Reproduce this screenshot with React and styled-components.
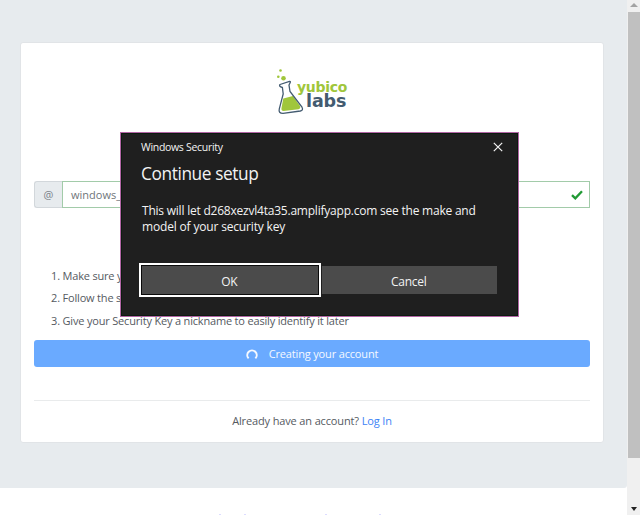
import React from "react";
import styled, { createGlobalStyle } from "styled-components";

const Global = createGlobalStyle`
  * { box-sizing: border-box; }
  html, body { margin: 0; height: 515px; overflow: hidden; background: #fff; }
  body { font-family: "Open Sans", "Noto Sans", sans-serif; color: #555a5f; font-size: 11px; }
`;
const Screen = styled.div`
  position: relative; display: flex; width: 640px; height: 515px; overflow: hidden;
`;
const Page = styled.div` width: 627px; height: 515px; display: flex; flex-direction: column; justify-content: space-between; `;
const Backdrop = styled.section`
  height: 488px; padding: 42px 23px 0 20px; background: #e7ebee; border-radius: 0 0 3px 0;
`;
const Card = styled.main`
  height: 401px; padding: 0 13px; background: #fff; border: 1px solid #e1e4e7; border-radius: 3px;
  display: flex; flex-direction: column;
`;
const LogoRow = styled.header` display: flex; justify-content: center; padding: 25px 0 0 0; height: 138px; `;
const Logo = styled.div` display: flex; width: 74px; height: 48px; `;
const LogoWords = styled.div`
  display: flex; flex-direction: column; margin: 12px 0 0 -8px; font-weight: 700;
`;
const Yubico = styled.span`
  color: #a0c63b; font-family: "DejaVu Sans", sans-serif; font-size: 14px; line-height: 14px; letter-spacing: -0.3px;
`;
const Labs = styled.span`
  color: #435b70; font-family: "DejaVu Sans", sans-serif; font-size: 17.5px; line-height: 14px; margin-left: 9px; letter-spacing: -0.1px;
`;
const InputGroup = styled.div` display: flex; height: 27px; `;
const Prefix = styled.div`
  width: 28px; display: flex; align-items: center; justify-content: center; color: #7b8289;
  background: #e7ebee; border: 1px solid #d2d7db; border-right: 0; border-radius: 3px 0 0 3px;
`;
const Field = styled.div`
  flex: 1; display: flex; align-items: center; justify-content: space-between; padding: 0 6px 0 8px;
  border: 1px solid #a2cba9; color: #70757a;
`;
const Steps = styled.ol`
  list-style: none; margin: 57px 0 8px; padding: 0 0 0 17px; line-height: 22.4px;
`;
const Step = styled.li` display: flex; white-space: nowrap; letter-spacing: -0.18px; `;
const Num = styled.span` width: 11.5px; letter-spacing: 0; `;
const Submit = styled.button`
  height: 27px; flex: none; display: flex; align-items: center; justify-content: center; gap: 11px; padding: 0; border: 0;
  border-radius: 3px; background: #6aaaff; color: #f5f9ff; font: inherit; letter-spacing: -0.16px;
`;
const Rule = styled.hr` width: 100%; margin: 33px 0 0; border: 0; border-top: 1px solid #e9ebec; `;
const Login = styled.p` margin: 11px 0 0; text-align: center; line-height: 17px; letter-spacing: -0.14px; `;
const Link = styled.a` color: #3c82f6; `;
const FooterEdge = styled.footer` display: flex; height: 1px; padding-left: 219px; `;
const Speck = styled.i` width: 2px; height: 1px; background: #dcdcff; margin-right: ${(p) => p.$gap}px; `;

const Scrollbar = styled.aside`
  width: 13px; background: #f0f0f0; display: flex; flex-direction: column; align-items: center; justify-content: space-between; padding: 3px 0 4px 1px;
`;
const Thumb = styled.div` width: 12px; height: 446px; background: #c0c0c0; margin: 5px 0 auto; `;

const Dialog = styled.section`
  position: absolute; left: 120px; top: 132px; width: 399px; height: 185px; padding: 0 21px 0 20px;
  background: #1f1f1f; border: 1px solid #b164a4; box-shadow: inset 0 0 0 1px #0c1a10; color: #f3f3f3;
`;
const TitleBar = styled.div`
  display: flex; justify-content: space-between; align-items: center; height: 28px; margin-right: -6px;
  font-size: 10.5px; letter-spacing: -0.3px;
`;
const Title = styled.h1` margin: 0; font-weight: 400; font-size: 17.3px; line-height: 26px; letter-spacing: -0.4px; `;
const Message = styled.p` margin: 16px 0 0 1px; font-size: 12px; line-height: 16px; white-space: nowrap; `;
const Line = styled.span` display: block; letter-spacing: ${(p) => p.$ls}px; `;
const Actions = styled.div` display: flex; align-items: center; margin: 28px 0 0 -2px; gap: 1px; `;
const Action = styled.button`
  width: ${(p) => (p.$focus ? 182 : 176)}px; height: ${(p) => (p.$focus ? 34 : 28)}px; padding: 2px 1px 0 0;
  font: inherit; font-size: 12px; letter-spacing: -0.25px; color: #f3f3f3; background: #4b4b4b;
  border: ${(p) => (p.$focus ? "2px solid #fff" : "0")};
  box-shadow: ${(p) => (p.$focus ? "inset 0 0 0 1px #0a0a0a" : "none")};
`;

const Flask = () => (
  <svg width="30" height="48" viewBox="0 0 30 48">
    <circle cx="5.5" cy="2.5" r="1.3" fill="#a0c63b" />
    <circle cx="3.3" cy="8.8" r="1.3" fill="#a0c63b" />
    <circle cx="8.5" cy="10.3" r="2.3" fill="#a0c63b" />
    <path d="M8.3 30.5 L18 28 L25 38 Q26 40.5 23.5 41.2 L8.5 43 Q6 43 6.5 40Z" fill="#a0c63b" />
    <path d="M5 16.5 L14.5 13.5 Q16 13.2 15 15 L14 17 L15 23.5 L27 39.2 Q28.6 42.2 25.3 43 L8 45.4 Q3.2 45.4 4.3 40.9 L8.2 26 L7.4 19.5 Q3.5 18.5 5 16.5Z" fill="none" stroke="#435b70" strokeWidth="1.3" />
  </svg>
);

export default function App() {
  return (
    <>
      <Global />
      <Screen>
        <Page>
          <Backdrop>
            <Card>
              <LogoRow>
                <Logo>
                  <Flask />
                  <LogoWords><Yubico>yubico</Yubico><Labs>labs</Labs></LogoWords>
                </Logo>
              </LogoRow>
              <InputGroup>
                <Prefix>@</Prefix>
                <Field>
                  <span>windows_</span>
                  <svg width="12" height="10" viewBox="0 0 12 10"><path d="M1 5.2 L4.3 8.4 L11 1.2" fill="none" stroke="#219a35" strokeWidth="2.3" /></svg>
                </Field>
              </InputGroup>
              <Steps>
                <Step><Num>1.</Num>Make sure y</Step>
                <Step><Num>2.</Num>Follow the s</Step>
                <Step><Num>3.</Num>Give your Security Key a nickname to easily identify it later</Step>
              </Steps>
              <Submit>
                <svg width="12" height="12" viewBox="0 0 12 12"><path d="M2.6 10.4 A4.7 4.7 0 1 1 9.4 10.4" fill="none" stroke="#f5f9ff" strokeWidth="2" /></svg>
                Creating your account
              </Submit>
              <Rule />
              <Login>Already have an account? <Link>Log In</Link></Login>
            </Card>
          </Backdrop>
          <FooterEdge><Speck $gap={23} /><Speck $gap={79} /><Speck $gap={52} /><Speck $gap={0} /></FooterEdge>
        </Page>
        <Scrollbar>
          <svg width="8" height="4" viewBox="0 0 8 4"><path d="M0 4 L4 0 L8 4Z" fill="#a3a3a3" /></svg>
          <Thumb />
          <svg width="6" height="4" viewBox="0 0 6 4"><path d="M0 0 H6 L3 4Z" fill="#222" /></svg>
        </Scrollbar>
        <Dialog>
          <TitleBar>
            <span>Windows Security</span>
            <svg width="10" height="10" viewBox="0 0 10 10"><path d="M.8 .8 L9.2 9.2 M9.2 .8 L.8 9.2" stroke="#f3f3f3" strokeWidth="1.2" /></svg>
          </TitleBar>
          <Title>Continue setup</Title>
          <Message>
            <Line $ls={-0.22}>This will let d268xezvl4ta35.amplifyapp.com see the make and</Line>
            <Line $ls={-0.17}>model of your security key</Line>
          </Message>
          <Actions>
            <Action $focus>OK</Action>
            <Action>Cancel</Action>
          </Actions>
        </Dialog>
      </Screen>
    </>
  );
}
